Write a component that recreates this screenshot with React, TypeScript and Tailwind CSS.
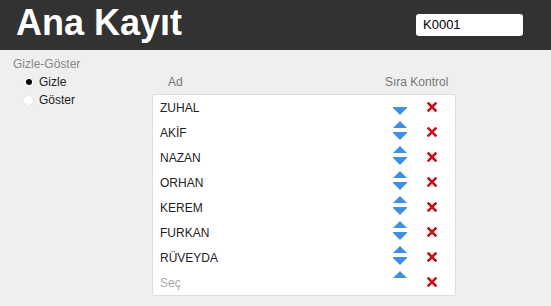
import React from 'react';

const names = ['ZUHAL', 'AKİF', 'NAZAN', 'ORHAN', 'KEREM', 'FURKAN', 'RÜVEYDA'];

function Up() {
  return (
    <svg width="14" height="7" viewBox="0 0 14 7" className="block">
      <polygon points="7,0 14,7 0,7" fill="#3f8fe3" />
    </svg>
  );
}

function Down() {
  return (
    <svg width="14" height="8" viewBox="0 0 14 8" className="block">
      <polygon points="0,0 14,0 14,1 7,8 0,1" fill="#3f8fe3" />
    </svg>
  );
}

function Cross() {
  return (
    <svg width="10" height="10" viewBox="0 0 10 10" className="block">
      <path d="M1.5 1.5 L8.5 8.5 M8.5 1.5 L1.5 8.5" stroke="#c4141b" strokeWidth="2.6" strokeLinecap="square" />
    </svg>
  );
}

function Row({ name, up, down, placeholder }: { name: string; up: boolean; down: boolean; placeholder?: boolean }) {
  return (
    <div className="h-[25px] flex items-center">
      <div className={`w-[240px] pl-[7px] text-[12px] ${placeholder ? 'text-[#aaaaaa]' : 'text-[#222222]'}`}>{name}</div>
      <div className="w-[14px] h-[19px] -mt-[4px] flex flex-col justify-between">
        <div className="h-[7px]">{up && <Up />}</div>
        <div className="h-[8px]">{down && <Down />}</div>
      </div>
      <div className="ml-[20px] -mt-[2px]">
        <Cross />
      </div>
    </div>
  );
}

export default function App() {
  return (
    <div className="w-[551px] h-[306px] bg-[#efefef] overflow-hidden" style={{ fontFamily: '"Liberation Sans", Arial, sans-serif' }}>
      {/* Header */}
      <div className="h-[50px] bg-[#323232] flex items-start justify-between pl-[16px] pr-[28px]">
        <h1 className="mt-[5px] text-[36px] leading-[36px] font-bold text-white">Ana Kayıt</h1>
        <div className="mt-[14px] w-[107px] h-[22px] bg-white rounded-[3px] flex items-center pl-[7px] text-[13px] text-black">
          K0001
        </div>
      </div>

      {/* Body */}
      <div className="flex pl-[13px] pt-[6px]">
        <div className="w-[139px]">
          <div className="pt-[1px] text-[12px] leading-[15px] text-[#888888]">Gizle-Göster</div>
          <div className="mt-[1px]">
            <div className="h-[18px] flex items-center pl-[10px] gap-[5px] text-[12px] text-[#222222]">
              <span className="w-[11px] h-[11px] rounded-full bg-white border border-[#e8e8e8] flex items-center justify-center">
                <span className="w-[6px] h-[6px] rounded-full bg-black" />
              </span>
              Gizle
            </div>
            <div className="h-[18px] flex items-center pl-[10px] gap-[5px] text-[12px] text-[#222222]">
              <span className="w-[11px] h-[11px] rounded-full bg-white border border-[#e8e8e8]" />
              Göster
            </div>
          </div>
        </div>

        <div className="pt-[17px]">
          <div className="h-[18px] flex items-center text-[12px] text-[#777777]">
            <div className="w-[233px] pl-[16px]">Ad</div>
            <div>Sıra Kontrol</div>
          </div>
          <div className="mt-[3px] w-[304px] bg-white border border-[#dddddd] rounded-[2px]">
            {names.map((n, i) => (
              <Row key={n} name={n} up={i > 0} down={true} />
            ))}
            <Row name="Seç" up={true} down={false} placeholder />
          </div>
        </div>
      </div>
    </div>
  );
}
